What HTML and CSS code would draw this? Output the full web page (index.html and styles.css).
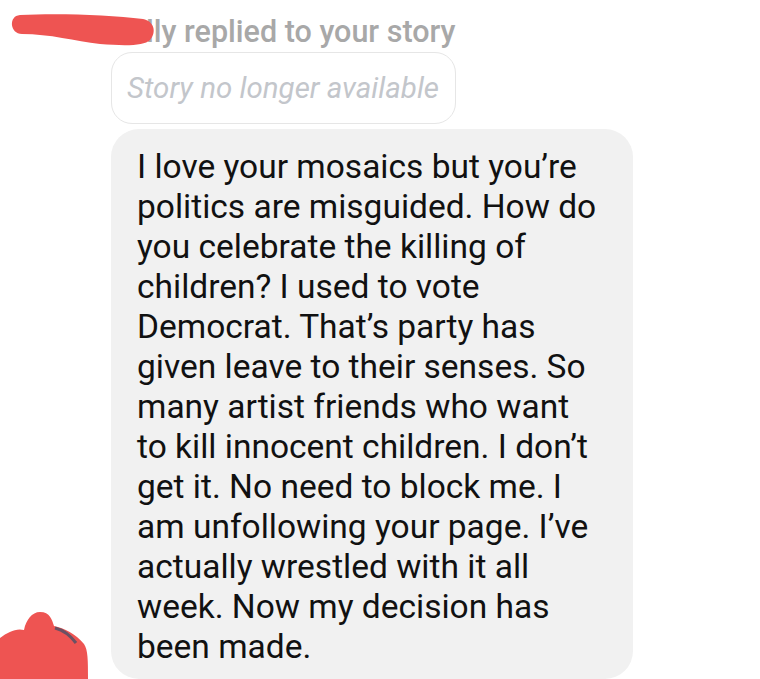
FILE: index.html
```html
<!DOCTYPE html>
<html>
<head>
<title>Story reply</title>
<link rel="stylesheet" href="styles.css">
</head>
<body>

<div class="thread">
  <div class="reply-label">
    <svg class="scribble" width="165" height="40" viewBox="0 10 165 40">
      <path d="M20 15 C 60 13, 110 15, 143 19 C 154 21, 157 32, 150 40 C 144 46, 125 46, 100 44 C 75 41, 50 34, 22 34 C 10 34, 8 16, 20 15 Z" fill="#ee5452"/>
    </svg>
    <span>lly replied to your story</span>
  </div>

  <div class="story-box">Story no longer available</div>

  <div class="message-row">
    <svg class="avatar-blot" width="95" height="79" viewBox="0 600 95 79">
      <path d="M0 638 C 8 632, 16 628, 24 630 C 26 620, 32 612, 40 612 C 50 612, 52 620, 54 626 C 64 628, 76 634, 84 644 C 88 650, 88 660, 88 679 L 0 679 Z" fill="#ee5452"/>
      <path d="M55 628 C 63 630, 70 635, 76 643" stroke="#4a5068" stroke-width="3" fill="none" opacity="0.8"/>
    </svg>
    <div class="bubble">
      I love your mosaics but you’re<br>
      politics are misguided. How do<br>
      you celebrate the killing of<br>
      children? I used to vote<br>
      Democrat. That’s party has<br>
      given leave to their senses. So<br>
      many artist friends who want<br>
      to kill innocent children. I don’t<br>
      get it. No need to block me. I<br>
      am unfollowing your page. I’ve<br>
      actually wrestled with it all<br>
      week. Now my decision has<br>
      been made.
    </div>
  </div>
</div>

</body>
</html>
```

FILE: styles.css
```css
body {
  margin: 0;
  background: #ffffff;
  font-family: Roboto, "Noto Sans", sans-serif;
  overflow: hidden;
}
.thread {
  padding: 14px 0 0 111px;
}
.reply-label {
  position: relative;
  padding-left: 35px;
  height: 38px;
  font-size: 30.5px;
  font-weight: 500;
  color: #a8a8a8;
  line-height: 36px;
}
.scribble {
  position: absolute;
  left: -111px;
  top: -4px;
}
.story-box {
  display: inline-block;
  box-sizing: border-box;
  height: 72px;
  padding: 0 16px 0 15px;
  border: 1px solid #e6e6e6;
  border-radius: 21px;
  font-size: 29.5px;
  font-style: italic;
  color: #c3c6cb;
  line-height: 70px;
}
.message-row {
  position: relative;
  margin-top: 5px;
}
.avatar-blot {
  position: absolute;
  left: -111px;
  bottom: 0;
}
.bubble {
  box-sizing: border-box;
  width: 522px;
  padding: 17.5px 10px 12px 26px;
  background: #f1f1f1;
  border-radius: 28px;
  font-size: 33.5px;
  line-height: 40px;
  color: #111111;
}
```
